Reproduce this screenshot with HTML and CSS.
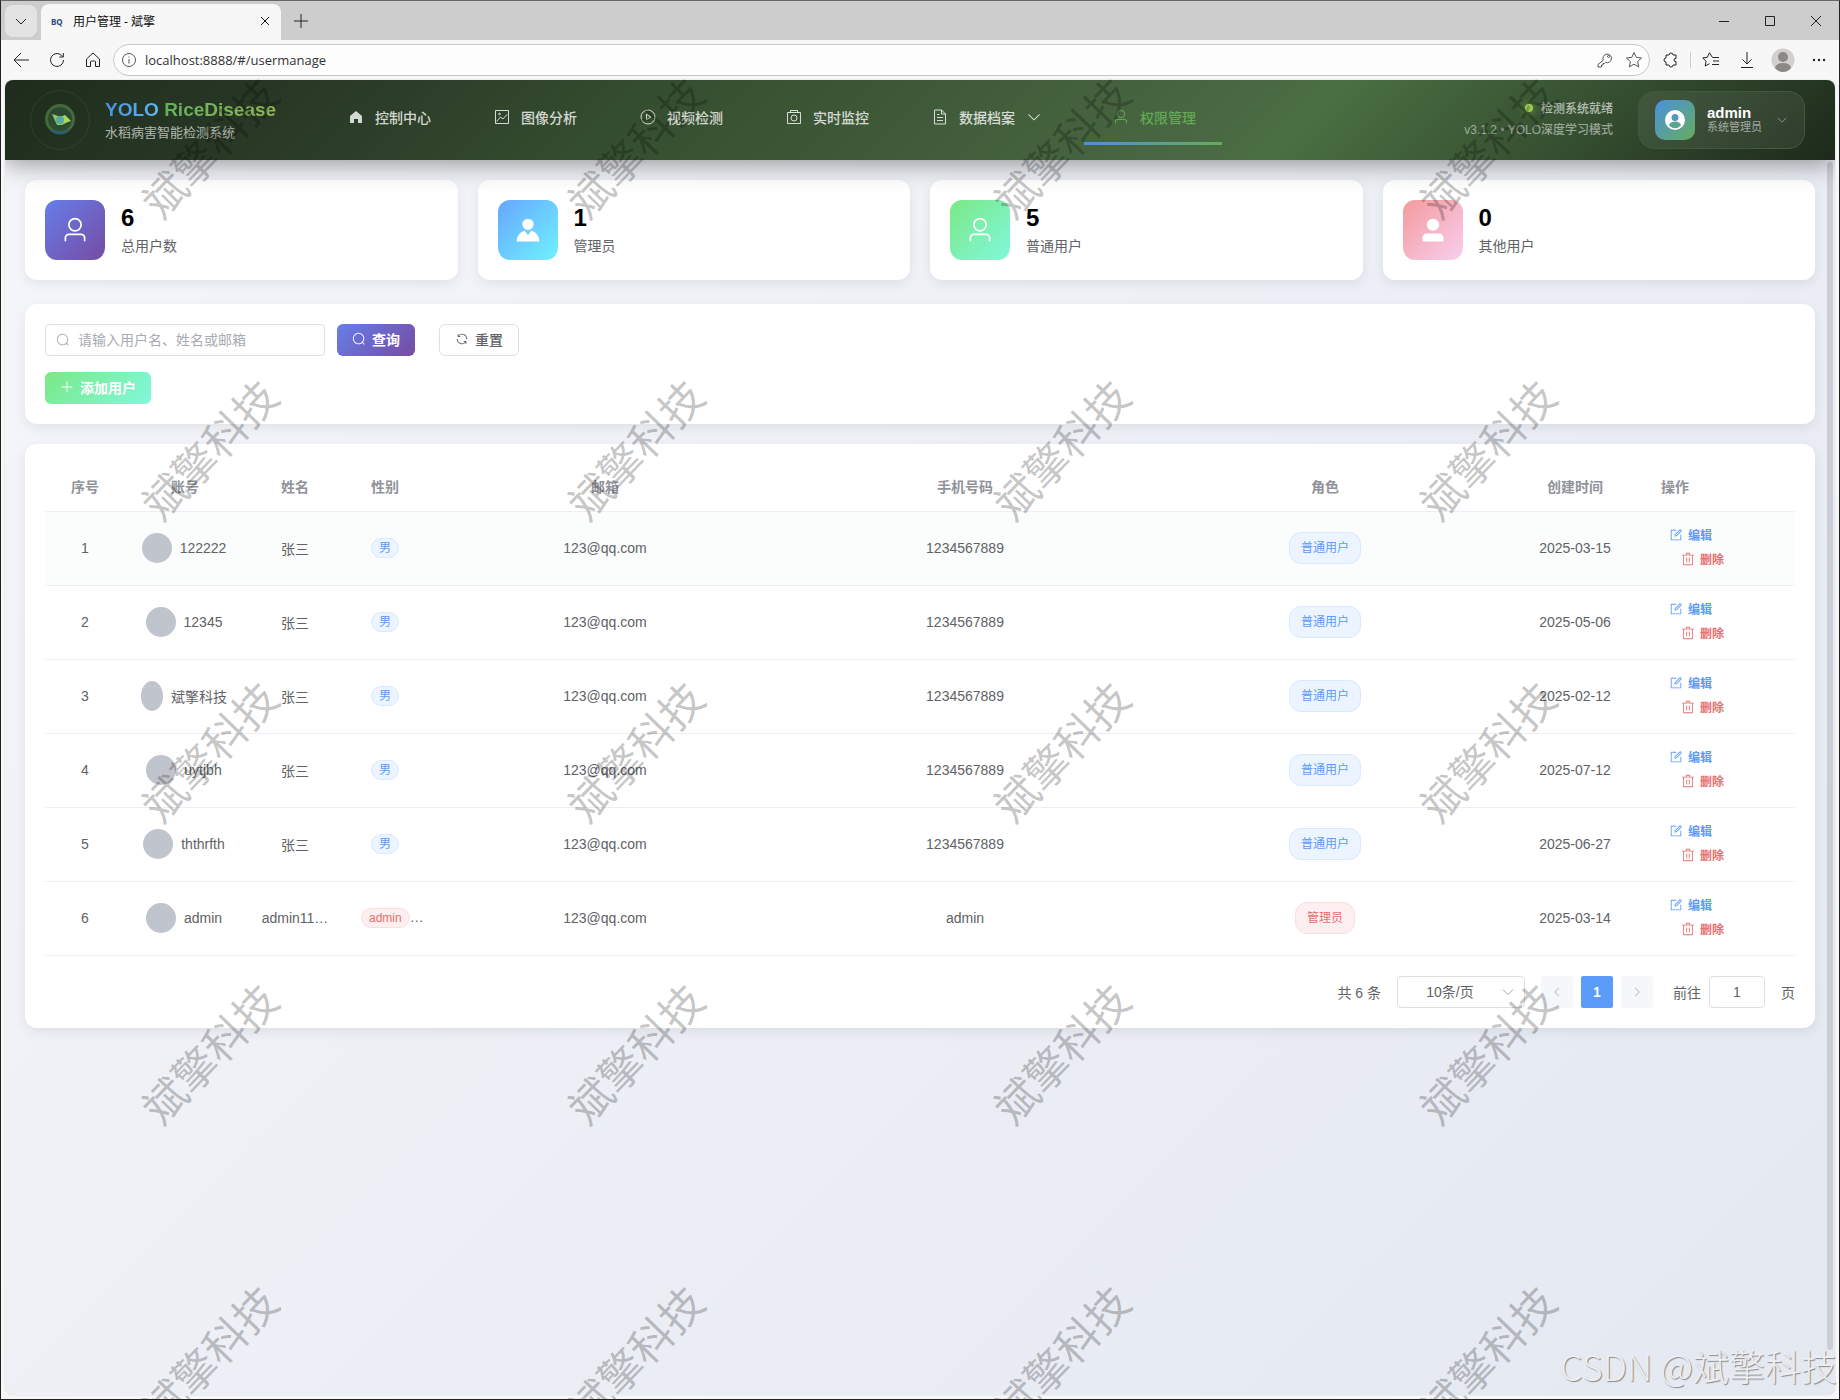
FILE: index.html
```
<!DOCTYPE html>
<html lang="zh-CN">
<head>
    <meta charset="UTF-8">
    <meta name="viewport" content="width=device-width, initial-scale=1.0">
    <title>用户管理 - 斌擎</title>
    <link rel="stylesheet" href="styles.css">
</head>
<body>

    <!-- icons -->
    <svg class="sprite" aria-hidden="true">
        <symbol id="i-user" viewBox="0 0 1024 1024"><path d="M512 512a192 192 0 1 0 0-384 192 192 0 0 0 0 384m0 64a256 256 0 1 1 0-512 256 256 0 0 1 0 512m320 320v-96a96 96 0 0 0-96-96H288a96 96 0 0 0-96 96v96a32 32 0 1 1-64 0v-96a160 160 0 0 1 160-160h448a160 160 0 0 1 160 160v96a32 32 0 1 1-64 0"/></symbol>
        <symbol id="i-user-filled" viewBox="0 0 1024 1024"><path d="M288 320a224 224 0 1 0 448 0 224 224 0 1 0-448 0m544 608H160a32 32 0 0 1-32-32v-96a160 160 0 0 1 160-160h448a160 160 0 0 1 160 160v96a32 32 0 0 1-32 32z"/></symbol>
        <symbol id="i-avatar" viewBox="0 0 1024 1024"><path d="M628.736 528.896A416 416 0 0 1 928 928H96a415.872 415.872 0 0 1 299.264-399.104L512 704zM720 304a208 208 0 1 1-416 0 208 208 0 0 1 416 0"/></symbol>
        <symbol id="i-search" viewBox="0 0 1024 1024"><path d="m795.904 750.72 124.992 124.928a32 32 0 0 1-45.248 45.248L750.656 795.904a416 416 0 1 1 45.248-45.248zM480 832a352 352 0 1 0 0-704 352 352 0 0 0 0 704"/></symbol>
        <symbol id="i-refresh" viewBox="0 0 1024 1024"><path d="M771.776 794.88A384 384 0 0 1 128 512h64a320 320 0 0 0 555.712 216.448H654.72a32 32 0 1 1 0-64h149.056a32 32 0 0 1 32 32v148.928a32 32 0 1 1-64 0v-50.56zM276.288 295.616h92.992a32 32 0 0 1 0 64H220.16a32 32 0 0 1-32-32V178.56a32 32 0 0 1 64 0v50.56A384 384 0 0 1 896.128 512h-64a320 320 0 0 0-555.776-216.384z"/></symbol>
        <symbol id="i-plus" viewBox="0 0 1024 1024"><path d="M480 480V128a32 32 0 0 1 64 0v352h352a32 32 0 1 1 0 64H544v352a32 32 0 1 1-64 0V544H128a32 32 0 0 1 0-64z"/></symbol>
        <symbol id="i-edit" viewBox="0 0 1024 1024"><path d="M832 512a32 32 0 1 1 64 0v352a32 32 0 0 1-32 32H160a32 32 0 0 1-32-32V160a32 32 0 0 1 32-32h352a32 32 0 0 1 0 64H192v640h640z"/><path d="m469.952 554.24 52.8-7.552L847.104 222.4a32 32 0 1 0-45.248-45.248L477.44 501.44l-7.552 52.8zm422.4-422.4a96 96 0 0 1 0 135.808l-331.84 331.84a32 32 0 0 1-18.112 9.088L436.8 623.68a32 32 0 0 1-36.224-36.224l15.104-105.6a32 32 0 0 1 9.024-18.112l331.904-331.84a96 96 0 0 1 135.744 0z"/></symbol>
        <symbol id="i-delete" viewBox="0 0 1024 1024"><path d="M160 256H96a32 32 0 0 1 0-64h256V95.936a32 32 0 0 1 32-32h256a32 32 0 0 1 32 32V192h256a32 32 0 1 1 0 64h-64v672a32 32 0 0 1-32 32H192a32 32 0 0 1-32-32zm448-64v-64H416v64zM224 896h576V256H224zm192-128a32 32 0 0 1-32-32V416a32 32 0 0 1 64 0v320a32 32 0 0 1-32 32m192 0a32 32 0 0 1-32-32V416a32 32 0 0 1 64 0v320a32 32 0 0 1-32 32"/></symbol>
        <symbol id="i-down" viewBox="0 0 1024 1024"><path d="M831.872 340.864 512 652.672 192.128 340.864a30.592 30.592 0 0 0-42.752 0 29.12 29.12 0 0 0 0 41.6L489.664 714.24a32 32 0 0 0 44.672 0l340.288-331.712a29.12 29.12 0 0 0 0-41.728 30.592 30.592 0 0 0-42.752 0z"/></symbol>
        <symbol id="i-home" viewBox="0 0 1024 1024"><path d="M512 128 128 447.936V896h255.936V640H640v256h255.936V447.936z"/></symbol>
        <symbol id="i-picture" viewBox="0 0 16 16"><g fill="none" stroke="currentColor"><path d="M1.500 1.500h13v13h-13zM2.500 12.500l4-4.500 2.500 2L13 5.500"/><circle cx="5.500" cy="5" r=".8"/></g></symbol>
        <symbol id="i-video" viewBox="0 0 16 16"><g fill="none" stroke="currentColor"><circle cx="8" cy="8" r="7"/><path d="M6.500 5.300v5.400L10.800 8z"/></g></symbol>
        <symbol id="i-camera" viewBox="0 0 16 16"><g fill="none" stroke="currentColor"><path d="M1.500 3.500h13v11h-13zM4.500 3.500v-2h7v2"/><circle cx="8" cy="9" r="3"/></g></symbol>
        <symbol id="i-doc" viewBox="0 0 16 16"><path fill="none" stroke="currentColor" d="M2.500 1h7l4 4v10h-11zM9.500 1v4h4M5 5.500h2.500M5 8.500h6M5 11.500h6"/></symbol>
    </svg>

    <!-- browser bar -->
    <div class="tabbar">
        <button class="tab-menu" aria-label="标签页"><svg width="12" height="12" viewBox="0 0 12 12"><path d="M1 4l5 5 5-5"/></svg></button>
        <div class="tab">
            <span class="favicon">BQ</span>
            <span class="tab-title">用户管理 - 斌擎</span>
            <button class="plain" aria-label="关闭标签页"><svg width="10" height="10" viewBox="0 0 10 10"><path d="M1 1l8 8M9 1l-8 8"/></svg></button>
        </div>
        <button class="plain tab-new" aria-label="新建标签页"><svg width="14" height="14" viewBox="0 0 14 14"><path d="M7 0v14M0 7h14"/></svg></button>
        <div class="window-buttons">
            <button class="plain" aria-label="最小化"><svg width="10" height="10" viewBox="0 0 10 10"><path d="M0 5.500h10"/></svg></button>
            <button class="plain" aria-label="最大化"><svg width="10" height="10" viewBox="0 0 10 10"><path d="M.5.5h9v9h-9z"/></svg></button>
            <button class="plain" aria-label="关闭"><svg width="10" height="10" viewBox="0 0 10 10"><path d="M0 0l10 10M10 0L0 10"/></svg></button>
        </div>
    </div>
    <div class="toolbar">
        <button class="plain" aria-label="后退"><svg width="16" height="16" viewBox="0 0 16 16"><path d="M16 8H1M8 1L1 8l7 7"/></svg></button>
        <button class="plain" aria-label="刷新"><svg width="16" height="16" viewBox="0 0 16 16"><path d="M14.500 8a6.500 6.500 0 1 1-2-4.700l1.500 1.500M14.300 1v4h-4"/></svg></button>
        <button class="plain" aria-label="主页"><svg width="16" height="16" viewBox="0 0 16 16"><path d="M1.500 7L8 1l6.500 6v7.500h-4V10q0-1-1-1h-3q-1 0-1 1v4.500h-4z"/></svg></button>
        <div class="address">
            <svg width="16" height="16" viewBox="0 0 16 16"><circle cx="8" cy="8" r="6.500"/><path d="M8 7v4.500M8 4.500v1"/></svg>
            <input type="text" aria-label="地址" value="localhost:8888/#/usermanage">
            <svg width="16" height="16" viewBox="0 0 16 16"><path d="M6.300 8.200a4.300 4.300 0 1 1 2.300 2.200L7.500 11.500H6v1.500H4.500v2H1v-2.500z"/><circle cx="11.500" cy="4.500" r="1"/></svg>
            <svg width="18" height="18" viewBox="0 0 18 18"><path d="M9 1.500l2.300 4.900 5.200.6-3.900 3.600 1.100 5.300L9 13.200l-4.700 2.700 1.100-5.300L1.500 7l5.200-.6z"/></svg>
        </div>
        <button class="plain" aria-label="扩展"><svg width="16" height="16" viewBox="0 0 16 16"><path d="M3 3h3a2 2 0 1 1 4 0h3v3.500q-2-.5-2 1.500t2 1.500V13h-3a2 2 0 1 1-4 0H3v-3a2 2 0 1 1 0-4z"/></svg></button>
        <span class="divider"></span>
        <button class="plain" aria-label="收藏夹"><svg width="18" height="16" viewBox="0 0 18 16"><path d="M10.500 5.500L7.500.8 5.300 5.300l-4.500.6L4 9.300 3.200 14l4.300-2.300M10.500 5.500H17M11 9h6M10 12.500h7"/></svg></button>
        <button class="plain" aria-label="下载"><svg width="14" height="16" viewBox="0 0 14 16"><path d="M7 0v12M2.500 7.500L7 12l4.500-4.500M1 15.500h12"/></svg></button>
        <svg class="profile" width="24" height="24" viewBox="0 0 24 24"><circle cx="12" cy="12" r="11.500"/><circle class="dark" cx="12" cy="9" r="5"/><path class="dark" d="M4 20q1-5 8-5t8 5q-3 4-8 4t-8-4z"/></svg>
        <button class="plain" aria-label="更多"><svg class="dots" width="14" height="4" viewBox="0 0 14 4"><circle cx="2" cy="2" r="1.200"/><circle cx="7" cy="2" r="1.200"/><circle cx="12" cy="2" r="1.200"/></svg></button>
    </div>

    <div class="app">
        <header class="header">
            <svg class="logo" width="60" height="60" viewBox="0 0 60 60">
                <circle cx="30" cy="30" r="29.500" fill="none" stroke="#4f7a48" stroke-opacity=".25"/>
                <circle cx="30" cy="29" r="13.500" fill="#2c4a30" stroke="#44693f" stroke-width="3"/>
                <path d="M21 40q9 6 18 0" fill="none" stroke="#2b5f66" stroke-width="3"/>
                <path d="M22 24l9 3 8 2 1 2-8 4h-5z" fill="#8fc860"/>
                <path d="M30 27l5-2 6 6-8 2z" fill="#a9d857"/>
                <circle cx="30" cy="30" r="4" fill="#57a8a4"/>
            </svg>
            <div class="brand">
                <h1><span class="brand-a">YOLO</span> <span class="brand-b">RiceDisease</span></h1>
                <p>水稻病害智能检测系统</p>
            </div>
            <nav class="nav">
                <a href="#/home"><svg><use href="#i-home"/></svg>控制中心</a>
                <a href="#/image"><svg><use href="#i-picture"/></svg>图像分析</a>
                <a href="#/video"><svg><use href="#i-video"/></svg>视频检测</a>
                <a href="#/camera"><svg><use href="#i-camera"/></svg>实时监控</a>
                <a href="#/records" class="has-sub"><svg><use href="#i-doc"/></svg>数据档案<svg><use href="#i-down"/></svg></a>
                <a href="#/usermanage" class="active"><svg><use href="#i-user"/></svg>权限管理</a>
            </nav>
            <div class="status">
                <p class="ready"><i></i>检测系统就绪</p>
                <p class="version">v3.1.2 • YOLO深度学习模式</p>
            </div>
            <button class="account">
                <span class="account-icon"><svg width="20" height="20" viewBox="0 0 20 20"><circle cx="10" cy="10" r="10" fill="#fff"/><circle cx="10" cy="7.500" r="3.500" fill="#5499bd"/><path d="M4 15.500q1-4 6-4t6 4q-3 2.700-6 2.700t-6-2.700z" fill="#58a392"/></svg></span>
                <span class="account-text"><b>admin</b><small>系统管理员</small></span>
                <svg class="account-arrow"><use href="#i-down"/></svg>
            </button>
        </header>

        <main class="content">
            <section class="stats">
                <div class="card stat"><span class="stat-icon purple"><svg><use href="#i-user"/></svg></span><div><b>6</b><p>总用户数</p></div></div>
                <div class="card stat"><span class="stat-icon blue"><svg><use href="#i-avatar"/></svg></span><div><b>1</b><p>管理员</p></div></div>
                <div class="card stat"><span class="stat-icon green"><svg><use href="#i-user"/></svg></span><div><b>5</b><p>普通用户</p></div></div>
                <div class="card stat"><span class="stat-icon pink"><svg><use href="#i-user-filled"/></svg></span><div><b>0</b><p>其他用户</p></div></div>
            </section>

            <section class="card search">
                <form class="search-row">
                    <label class="search-box"><svg><use href="#i-search"/></svg><input type="text" aria-label="搜索用户" placeholder="请输入用户名、姓名或邮箱"></label>
                    <button type="button" class="btn purple"><svg><use href="#i-search"/></svg>查询</button>
                    <button type="reset" class="btn reset"><svg><use href="#i-refresh"/></svg>重置</button>
                </form>
                <button type="button" class="btn green"><svg><use href="#i-plus"/></svg>添加用户</button>
            </section>

            <section class="card">
                <table class="users">
                    <colgroup>
                        <col class="w80"><col class="w120"><col class="w100"><col class="w80">
                        <col><col><col>
                        <col class="w140"><col class="w150">
                    </colgroup>
                    <thead>
                        <tr><th>序号</th><th>账号</th><th>姓名</th><th>性别</th><th>邮箱</th><th>手机号码</th><th>角色</th><th>创建时间</th><th class="ops">操作</th></tr>
                    </thead>
                    <tbody>
                        <tr class="hover">
                            <td>1</td><td><div class="who"><i></i><span>122222</span></div></td><td>张三</td><td><span class="tag">男</span></td>
                            <td>123@qq.com</td><td>1234567889</td><td><span class="tag role">普通用户</span></td><td>2025-03-15</td>
                            <td class="ops"><button class="edit"><svg><use href="#i-edit"/></svg>编辑</button><button class="del"><svg><use href="#i-delete"/></svg>删除</button></td>
                        </tr>
                        <tr>
                            <td>2</td><td><div class="who"><i></i><span>12345</span></div></td><td>张三</td><td><span class="tag">男</span></td>
                            <td>123@qq.com</td><td>1234567889</td><td><span class="tag role">普通用户</span></td><td>2025-05-06</td>
                            <td class="ops"><button class="edit"><svg><use href="#i-edit"/></svg>编辑</button><button class="del"><svg><use href="#i-delete"/></svg>删除</button></td>
                        </tr>
                        <tr>
                            <td>3</td><td><div class="who"><i></i><span>斌擎科技</span></div></td><td>张三</td><td><span class="tag">男</span></td>
                            <td>123@qq.com</td><td>1234567889</td><td><span class="tag role">普通用户</span></td><td>2025-02-12</td>
                            <td class="ops"><button class="edit"><svg><use href="#i-edit"/></svg>编辑</button><button class="del"><svg><use href="#i-delete"/></svg>删除</button></td>
                        </tr>
                        <tr>
                            <td>4</td><td><div class="who"><i></i><span>uytjbh</span></div></td><td>张三</td><td><span class="tag">男</span></td>
                            <td>123@qq.com</td><td>1234567889</td><td><span class="tag role">普通用户</span></td><td>2025-07-12</td>
                            <td class="ops"><button class="edit"><svg><use href="#i-edit"/></svg>编辑</button><button class="del"><svg><use href="#i-delete"/></svg>删除</button></td>
                        </tr>
                        <tr>
                            <td>5</td><td><div class="who"><i></i><span>ththrfth</span></div></td><td>张三</td><td><span class="tag">男</span></td>
                            <td>123@qq.com</td><td>1234567889</td><td><span class="tag role">普通用户</span></td><td>2025-06-27</td>
                            <td class="ops"><button class="edit"><svg><use href="#i-edit"/></svg>编辑</button><button class="del"><svg><use href="#i-delete"/></svg>删除</button></td>
                        </tr>
                        <tr>
                            <td>6</td><td><div class="who"><i></i><span>admin</span></div></td><td>admin11…</td><td><span class="tag red">admin</span>…</td>
                            <td>123@qq.com</td><td>admin</td><td><span class="tag role red">管理员</span></td><td>2025-03-14</td>
                            <td class="ops"><button class="edit"><svg><use href="#i-edit"/></svg>编辑</button><button class="del"><svg><use href="#i-delete"/></svg>删除</button></td>
                        </tr>
                    </tbody>
                </table>
                <div class="pagination">
                    <span class="total">共 6 条</span>
                    <span class="size"><select aria-label="每页条数"><option>10条/页</option></select><svg><use href="#i-down"/></svg></span>
                    <div class="pages">
                        <button class="prev" aria-label="上一页" disabled><svg><use href="#i-down"/></svg></button>
                        <button class="current">1</button>
                        <button class="next" aria-label="下一页" disabled><svg><use href="#i-down"/></svg></button>
                    </div>
                    <label for="page">前往</label>
                    <input id="page" type="text" value="1">
                    <span class="unit">页</span>
                </div>
            </section>
        </main>
        <div class="scrollbar"></div>
    </div>

    <div class="watermark" aria-hidden="true">
        <span>斌擎科技</span><span>斌擎科技</span><span>斌擎科技</span><span>斌擎科技</span>
        <span>斌擎科技</span><span>斌擎科技</span><span>斌擎科技</span><span>斌擎科技</span>
        <span>斌擎科技</span><span>斌擎科技</span><span>斌擎科技</span><span>斌擎科技</span>
        <span>斌擎科技</span><span>斌擎科技</span><span>斌擎科技</span><span>斌擎科技</span>
        <span>斌擎科技</span><span>斌擎科技</span><span>斌擎科技</span><span>斌擎科技</span>
    </div>
    <div class="csdn">CSDN @斌擎科技</div>

</body>
</html>
```

FILE: styles.css
```
* {
    box-sizing: border-box;
}
body {
    position: relative;
    display: flex;
    flex-direction: column;
    height: 100vh;
    margin: 0;
    border: 1px solid #222;
    border-top-color: #666;
    background: #f7f7f7;
    overflow: hidden;
    font-family: "Liberation Sans", "Noto Sans CJK SC", sans-serif;
    font-size: 14px;
    color: #606266;
}
h1, p {
    margin: 0;
}
button, input, select {
    font: inherit;
    color: inherit;
}
button {
    display: inline-flex;
    align-items: center;
    justify-content: center;
    padding: 0;
    border: none;
    background: none;
    cursor: pointer;
}
svg {
    flex: none;
    fill: currentColor;
}
.sprite {
    position: absolute;
    width: 0;
    height: 0;
}

/* browser */
.tabbar, .toolbar {
    display: flex;
    align-items: center;
    flex: none;
    color: #222;
}
.tabbar svg, .toolbar svg {
    fill: none;
    stroke: currentColor;
}
.tabbar {
    height: 39px;
    padding-left: 4px;
    background: #cdcdcd;
}
.tab-menu {
    width: 32px;
    height: 32px;
    border-radius: 8px;
    background: #e3e3e3;
}
.tab {
    display: flex;
    align-items: center;
    align-self: flex-end;
    width: 240px;
    height: 36px;
    margin-left: 4px;
    padding: 0 11px 2px 10px;
    border-radius: 8px 8px 0 0;
    background: #f7f7f7;
    font-family: "Noto Sans", "Noto Sans CJK SC", sans-serif;
    font-size: 12px;
    color: #111;
}
.favicon {
    width: 22px;
    font-size: 8px;
    font-weight: bold;
    color: #2b4a7a;
}
.tab-title {
    flex: 1;
}
.plain {
    flex: none;
}
.tab-new {
    margin-left: 13px;
}
.window-buttons {
    display: flex;
    gap: 36px;
    margin-left: auto;
    padding-right: 18px;
}
.toolbar {
    gap: 20px;
    height: 40px;
    padding: 0 13px 0 12px;
}
.address {
    display: flex;
    align-items: center;
    flex: 1;
    gap: 12px;
    height: 32px;
    margin: 0 -7px 0 -8px;
    padding: 0 6px 0 7px;
    border: 1px solid #c8c8c8;
    border-radius: 16px;
    background: #fdfdfd;
    color: #555;
}
.address input {
    flex: 1;
    min-width: 0;
    margin-left: -4px;
    padding: 0;
    border: none;
    background: none;
    font-family: "Open Sans", sans-serif;
    font-size: 13px;
    color: #333;
}
.divider {
    width: 1px;
    height: 16px;
    margin: 0 -9px;
    background: #ccc;
}
.toolbar .profile {
    margin: 0 -3px;
    fill: #d2d0cc;
    stroke: none;
}
.toolbar .profile .dark {
    fill: #8b8988;
}
.toolbar .dots {
    fill: #222;
    stroke: none;
}

/* page */
.app {
    position: relative;
    flex: 1;
    margin: 0 4px 4px;
    border-radius: 8px;
    background: linear-gradient(135deg, #f5f6fa, #e4e8f1);
    box-shadow: 0 0 1px #999;
    overflow: hidden;
}
.header {
    position: relative;
    z-index: 1;
    display: flex;
    align-items: center;
    height: 80px;
    padding: 0 30px 0 25px;
    background: linear-gradient(135deg, #1f2c1d 0%, #2b3c28 20%, #364f30 36%, #4a6843 66%, #4a7042 70%, #344c2f 86%, #1d2a1b 100%);
    box-shadow: 0 4px 24px rgba(0, 0, 0, 0.4);
    color: #fff;
}
.brand {
    width: 200px;
    margin-left: 15px;
}
.brand h1 {
    font-size: 19px;
    line-height: 26px;
    white-space: nowrap;
}
.brand p {
    font-size: 13px;
    line-height: 20px;
    color: rgba(255, 255, 255, 0.65);
}
.brand-a {
    background: linear-gradient(90deg, #4a90e2, #5ab8f0);
    background-clip: text;
    color: transparent;
}
.brand-b {
    background: linear-gradient(90deg, #62b05c, #93b852);
    background-clip: text;
    color: transparent;
}
.nav {
    display: flex;
    align-self: stretch;
    gap: 8px;
    margin: 15px 0;
    padding-left: 14px;
}
.nav a {
    display: flex;
    align-items: center;
    gap: 11px;
    padding: 0 26px 3px 29px;
    border-bottom: 3px solid transparent;
    font-weight: 500;
    color: rgba(255, 255, 255, 0.8);
    text-decoration: none;
    white-space: nowrap;
}
.nav svg {
    width: 16px;
    height: 16px;
}
.nav .has-sub {
    padding-right: 34px;
}
.nav .active {
    border-image: linear-gradient(90deg, #4a90e2, #66ad55) 1;
    color: #62a855;
}
.status {
    margin-left: auto;
    text-align: right;
    white-space: nowrap;
}
.status p {
    line-height: 21px;
}
.ready, .version {
    font-size: 12px;
    font-weight: 500;
}
.ready {
    color: rgba(255, 255, 255, 0.65);
}
.ready i {
    display: inline-block;
    width: 8px;
    height: 8px;
    margin-right: 8px;
    border-radius: 50%;
    background: #9bcb54;
    box-shadow: 0 0 8px #7aa845;
    vertical-align: 1px;
}
.version {
    color: rgba(255, 255, 255, 0.5);
}
.account {
    gap: 12px;
    height: 58px;
    margin-left: 25px;
    padding: 0 16px;
    border: 1px solid #3f5b39;
    border-radius: 16px;
    background: rgba(255, 255, 255, 0.07);
}
.account-icon {
    display: flex;
    align-items: center;
    justify-content: center;
    width: 40px;
    height: 40px;
    border-radius: 10px;
    background: linear-gradient(135deg, #4a90e2, #66ad5c);
}
.account-text {
    display: flex;
    flex-direction: column;
    text-align: left;
    line-height: 15px;
}
.account-text b {
    font-size: 15px;
}
.account-text small {
    font-size: 11px;
    color: rgba(255, 255, 255, 0.55);
}
.account-arrow {
    width: 12px;
    height: 12px;
    margin-left: 2px;
    opacity: 0.5;
}
.content {
    padding: 20px;
}
.card {
    margin-bottom: 20px;
    padding: 20px;
    border-radius: 12px;
    background: #fff;
    box-shadow: 0 4px 12px rgba(0, 0, 0, 0.07);
}
.stats {
    display: grid;
    grid-template-columns: repeat(4, 1fr);
    gap: 20px;
    margin-bottom: 24px;
}
.stat {
    display: flex;
    gap: 16px;
    margin-bottom: 0;
}
.stat-icon {
    display: flex;
    align-items: center;
    justify-content: center;
    width: 60px;
    height: 60px;
    border-radius: 12px;
    color: #fff;
}
.stat-icon svg {
    width: 28px;
    height: 28px;
}
.stat b {
    display: block;
    margin-top: 1px;
    font-size: 24px;
    line-height: 34px;
    color: #000;
}
.stat p {
    line-height: 22px;
}
.purple {
    background: linear-gradient(135deg, #667eea, #764ba2);
    color: #fff;
}
.blue {
    background: linear-gradient(135deg, #66a6ff, #70f2ff);
}
.green {
    background: linear-gradient(135deg, #7be885, #80f8dc);
    color: #fff;
}
.pink {
    background: linear-gradient(135deg, #f39a9c, #f8cfee);
}
.search {
    height: 120px;
}
.search-row {
    display: flex;
    gap: 12px;
    margin-bottom: 16px;
}
.search-box {
    display: flex;
    align-items: center;
    gap: 8px;
    width: 280px;
    height: 32px;
    padding: 0 10px;
    border: 1px solid #dcdfe6;
    border-radius: 4px;
    color: #a8abb2;
}
.search-box svg, .btn svg {
    width: 14px;
    height: 14px;
}
.search-box input {
    flex: 1;
    min-width: 0;
    padding: 0;
    border: none;
    outline: none;
}
.search-box input::placeholder {
    color: #a8abb2;
}
.btn {
    gap: 6px;
    height: 32px;
    padding: 0 15px 2px;
    border-radius: 6px;
    font-weight: bold;
}
.btn.reset {
    margin-left: 12px;
    border: 1px solid #dcdfe6;
    font-weight: 500;
}

/* table */
.users {
    width: 100%;
    border-collapse: collapse;
    table-layout: fixed;
    text-align: center;
}
.w80 { width: 80px; }
.w100 { width: 100px; }
.w120 { width: 120px; }
.w140 { width: 140px; }
.w150 { width: 150px; }
.users th {
    height: 47px;
    padding: 0 0 3px;
    border-bottom: 1px solid #ebeef5;
    font-weight: bold;
    color: #909399;
}
.users td {
    height: 74px;
    padding: 0 16px 1px;
    border-bottom: 1px solid #ebeef5;
    white-space: nowrap;
}
.users .hover {
    background: #fbfdfd;
}
.users .ops {
    padding-left: 16px;
    text-align: left;
}
.who {
    display: flex;
    align-items: center;
    justify-content: center;
    gap: 8px;
    padding-right: 2px;
}
.who i {
    width: 30px;
    height: 30px;
    border-radius: 50%;
    background: #c0c4cc;
}
.tag {
    display: inline-block;
    padding: 0 7px;
    border: 1px solid #d9e9ff;
    border-radius: 10px;
    background: #ecf4ff;
    font-size: 12px;
    line-height: 18px;
    color: #5b9bfa;
}
.tag.role {
    padding: 0 11px;
    border-radius: 12px;
    line-height: 30px;
}
.tag.red {
    border-color: #fbdfe0;
    background: #fdeff0;
    color: #e66e6e;
}
.ops button {
    display: flex;
    gap: 5px;
    height: 24px;
    padding: 0 8px 2px;
    font-size: 12px;
    font-weight: bold;
}
.ops svg {
    width: 14px;
    height: 14px;
}
.ops .edit {
    color: #5b9bfa;
}
.ops .del {
    margin-left: 12px;
    color: #e87070;
}

/* pagination */
.pagination {
    display: flex;
    align-items: center;
    justify-content: flex-end;
    margin-top: 20px;
}
.size {
    position: relative;
    margin: 0 16px;
}
.size select {
    width: 128px;
    height: 32px;
    padding: 0 22px 0 0;
    border: 1px solid #dcdfe6;
    border-radius: 4px;
    background: #fff;
    text-align: center;
    text-align-last: center;
    appearance: none;
}
.size svg {
    position: absolute;
    top: 9px;
    right: 10px;
    width: 14px;
    height: 14px;
    color: #a8abb2;
}
.pages {
    display: flex;
    gap: 8px;
    margin-right: 20px;
}
.pages button {
    width: 32px;
    height: 32px;
    border-radius: 2px;
    background: #f5f7fa;
    color: #a8abb2;
}
.pages .current {
    background: #5b9cfa;
    color: #fff;
    font-weight: bold;
}
.pages svg {
    width: 12px;
    height: 12px;
}
.prev svg {
    transform: rotate(90deg);
}
.next svg {
    transform: rotate(-90deg);
}
#page {
    width: 56px;
    height: 32px;
    margin: 0 16px 0 8px;
    padding: 0;
    border: 1px solid #dcdfe6;
    border-radius: 4px;
    text-align: center;
}
.scrollbar {
    position: absolute;
    top: 82px;
    right: 2px;
    bottom: 45px;
    width: 6px;
    border-radius: 3px;
    background: #cbced7;
}

/* watermark over the whole window */
.watermark {
    position: absolute;
    inset: -6px 0 0 -6px;
    z-index: 2;
    display: grid;
    grid-template-columns: repeat(4, 426px);
    grid-auto-rows: 302px;
    overflow: hidden;
    pointer-events: none;
    font-family: "Noto Sans CJK SC", sans-serif;
    font-size: 43px;
    color: rgba(0, 0, 0, 0.24);
}
.watermark span {
    place-self: center;
    transform: rotate(-46deg);
}
.csdn {
    position: absolute;
    right: 2px;
    bottom: 8px;
    z-index: 3;
    font-family: "Noto Sans CJK SC", sans-serif;
    font-size: 36px;
    font-weight: 300;
    color: #eceef2;
    text-shadow: 1px 1px 1px #888;
    pointer-events: none;
}
```
